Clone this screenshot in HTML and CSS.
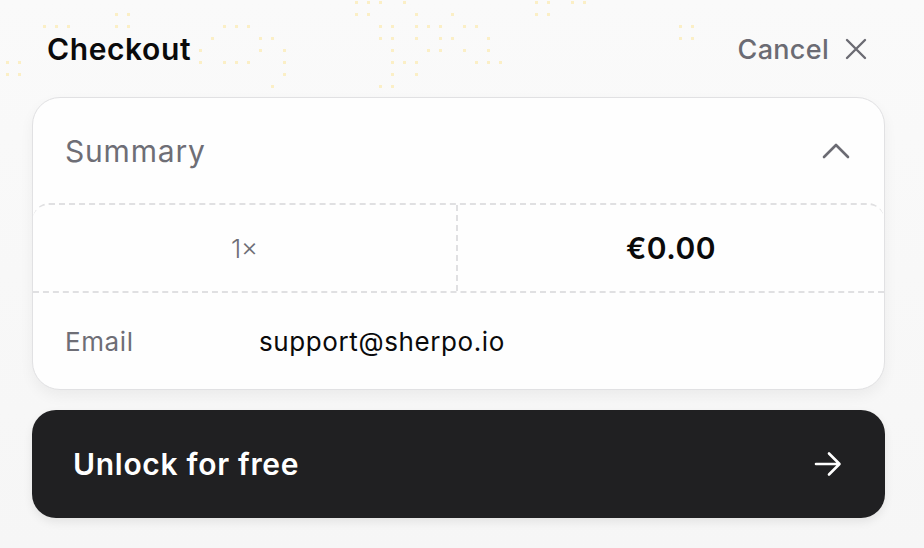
FILE: index.html
```html
<!DOCTYPE html>
<html lang="en">
<head>
<meta charset="utf-8">
<title>Checkout</title>
<link rel="stylesheet" href="styles.css">
</head>
<body>
<div class="page">
  <svg class="dots" width="720" height="92" viewBox="0 0 720 92" aria-hidden="true">
    <g fill="#fbefc6">
      <rect x="355" y="1" width="3" height="3"/><rect x="367" y="1" width="3" height="3"/><rect x="379" y="1" width="3" height="3"/><rect x="403" y="1" width="3" height="3"/><rect x="535" y="1" width="3" height="3"/><rect x="547" y="1" width="3" height="3"/><rect x="571" y="1" width="3" height="3"/><rect x="583" y="1" width="3" height="3"/>
      <rect x="115" y="13" width="3" height="3"/><rect x="127" y="13" width="3" height="3"/><rect x="355" y="13" width="3" height="3"/><rect x="367" y="13" width="3" height="3"/><rect x="415" y="13" width="3" height="3"/><rect x="451" y="13" width="3" height="3"/><rect x="535" y="13" width="3" height="3"/><rect x="547" y="13" width="3" height="3"/>
      <rect x="43" y="25" width="3" height="3"/><rect x="55" y="25" width="3" height="3"/><rect x="67" y="25" width="3" height="3"/><rect x="115" y="25" width="3" height="3"/><rect x="127" y="25" width="3" height="3"/><rect x="223" y="25" width="3" height="3"/><rect x="235" y="25" width="3" height="3"/><rect x="247" y="25" width="3" height="3"/><rect x="379" y="25" width="3" height="3"/><rect x="391" y="25" width="3" height="3"/><rect x="415" y="25" width="3" height="3"/><rect x="427" y="25" width="3" height="3"/><rect x="439" y="25" width="3" height="3"/><rect x="463" y="25" width="3" height="3"/><rect x="475" y="25" width="3" height="3"/><rect x="679" y="25" width="3" height="3"/><rect x="691" y="25" width="3" height="3"/>
      <rect x="211" y="37" width="3" height="3"/><rect x="259" y="37" width="3" height="3"/><rect x="271" y="37" width="3" height="3"/><rect x="379" y="37" width="3" height="3"/><rect x="391" y="37" width="3" height="3"/><rect x="415" y="37" width="3" height="3"/><rect x="439" y="37" width="3" height="3"/><rect x="451" y="37" width="3" height="3"/><rect x="487" y="37" width="3" height="3"/><rect x="679" y="37" width="3" height="3"/><rect x="691" y="37" width="3" height="3"/>
      <rect x="199" y="49" width="3" height="3"/><rect x="259" y="49" width="3" height="3"/><rect x="283" y="49" width="3" height="3"/><rect x="391" y="49" width="3" height="3"/><rect x="427" y="49" width="3" height="3"/><rect x="439" y="49" width="3" height="3"/><rect x="463" y="49" width="3" height="3"/><rect x="487" y="49" width="3" height="3"/>
      <rect x="6" y="61" width="3" height="3"/><rect x="18" y="61" width="3" height="3"/><rect x="199" y="61" width="3" height="3"/><rect x="223" y="61" width="3" height="3"/><rect x="235" y="61" width="3" height="3"/><rect x="247" y="61" width="3" height="3"/><rect x="283" y="61" width="3" height="3"/><rect x="391" y="61" width="3" height="3"/><rect x="403" y="61" width="3" height="3"/><rect x="415" y="61" width="3" height="3"/><rect x="475" y="61" width="3" height="3"/><rect x="487" y="61" width="3" height="3"/><rect x="499" y="61" width="3" height="3"/>
      <rect x="6" y="73" width="3" height="3"/><rect x="18" y="73" width="3" height="3"/><rect x="283" y="73" width="3" height="3"/><rect x="391" y="73" width="3" height="3"/><rect x="415" y="73" width="3" height="3"/>
      <rect x="271" y="85" width="3" height="3"/><rect x="379" y="85" width="3" height="3"/><rect x="391" y="85" width="3" height="3"/>
    </g>
  </svg>

  <header class="header">
    <h1 class="title">Checkout</h1>
    <button class="cancel" type="button">
      <span>Cancel</span>
      <svg width="22" height="22" viewBox="0 0 22 22" aria-hidden="true">
        <path d="M2 2 L20 20 M20 2 L2 20" stroke="#6b6b73" stroke-width="2.4" stroke-linecap="round" fill="none"/>
      </svg>
    </button>
  </header>

  <section class="card">
    <div class="summary-head">
      <span class="summary-label">Summary</span>
      <svg width="28" height="16" viewBox="0 0 28 16" aria-hidden="true">
        <path d="M2 14 L14 2 L26 14" stroke="#6b6b73" stroke-width="2.6" stroke-linecap="round" stroke-linejoin="round" fill="none"/>
      </svg>
    </div>
    <div class="items">
      <div class="cell qty">1×</div>
      <div class="cell price">€0.00</div>
    </div>
    <div class="email-row">
      <span class="email-label">Email</span>
      <span class="email-value">support@sherpo.io</span>
    </div>
  </section>

  <button class="unlock" type="button">
    <span>Unlock for free</span>
    <svg width="28" height="26" viewBox="0 0 28 26" aria-hidden="true">
      <path d="M2 13 L25 13 M15 2.5 L25.5 13 L15 23.5" stroke="#ffffff" stroke-width="2.6" stroke-linecap="round" stroke-linejoin="round" fill="none"/>
    </svg>
  </button>
</div>
</body>
</html>
```

FILE: styles.css
```css
* { box-sizing: border-box; }

html, body {
  margin: 0;
  padding: 0;
  background: #f8f8f8;
  font-family: Inter, "Noto Sans", "Liberation Sans", sans-serif;
  color: #0b0b0c;
}

.page {
  position: relative;
  width: 924px;
  height: 548px;
  padding: 21px 39px 0 32px;
  overflow: hidden;
  background: linear-gradient(#fafafa, #f6f6f6);
}

.dots {
  position: absolute;
  left: 0;
  top: 0;
  pointer-events: none;
}

.header {
  position: relative;
  height: 56px;
  display: flex;
  align-items: center;
  justify-content: space-between;
  padding: 0 18px 0 15px;
}

.title {
  margin: 0;
  font-size: 30px;
  font-weight: 600;
  letter-spacing: 0.6px;
  color: #0a0a0b;
}

.cancel {
  display: flex;
  align-items: center;
  gap: 16px;
  border: 0;
  padding: 0;
  background: none;
  font-family: inherit;
  font-size: 27px;
  font-weight: 500;
  letter-spacing: 0.3px;
  color: #6b6b73;
}

.card {
  position: relative;
  margin-top: 20px;
  height: 293px;
  background: #fefefe;
  border: 1.5px solid #e1e1e3;
  border-radius: 28px;
  box-shadow: 0 6px 14px rgba(0, 0, 0, 0.05);
  display: flex;
  flex-direction: column;
}

.summary-head {
  height: 105px;
  display: flex;
  align-items: center;
  justify-content: space-between;
  padding: 0 34px 0 32px;
}

.summary-label {
  font-size: 30px;
  font-weight: 400;
  letter-spacing: 0.8px;
  color: #6e6e76;
}

.items {
  height: 90px;
  display: flex;
  border-top: 2px dashed #e0e0e2;
  border-bottom: 2px dashed #e0e0e2;
  border-radius: 16px 16px 0 0;
}

.cell {
  display: flex;
  align-items: center;
  justify-content: center;
}

.qty {
  width: 425px;
  border-right: 2px dashed #e0e0e2;
  font-size: 26px;
  font-weight: 300;
  color: #6e6e76;
}

.price {
  flex: 1;
  font-size: 30px;
  font-weight: 600;
  letter-spacing: 0.5px;
  color: #0a0a0b;
}

.email-row {
  flex: 1;
  display: flex;
  align-items: center;
  padding: 0 32px;
  font-size: 26px;
  letter-spacing: 0.6px;
}

.email-label {
  width: 194px;
  color: #6e6e76;
}

.email-value {
  color: #0a0a0b;
}

.unlock {
  margin-top: 20px;
  width: 100%;
  height: 108px;
  display: flex;
  align-items: center;
  justify-content: space-between;
  padding: 0 43px 0 41px;
  border: 0;
  border-radius: 24px;
  background: #202022;
  color: #ffffff;
  font-family: inherit;
  font-size: 30px;
  font-weight: 600;
  letter-spacing: 0.7px;
  box-shadow: 0 4px 10px rgba(0, 0, 0, 0.08);
}
```
